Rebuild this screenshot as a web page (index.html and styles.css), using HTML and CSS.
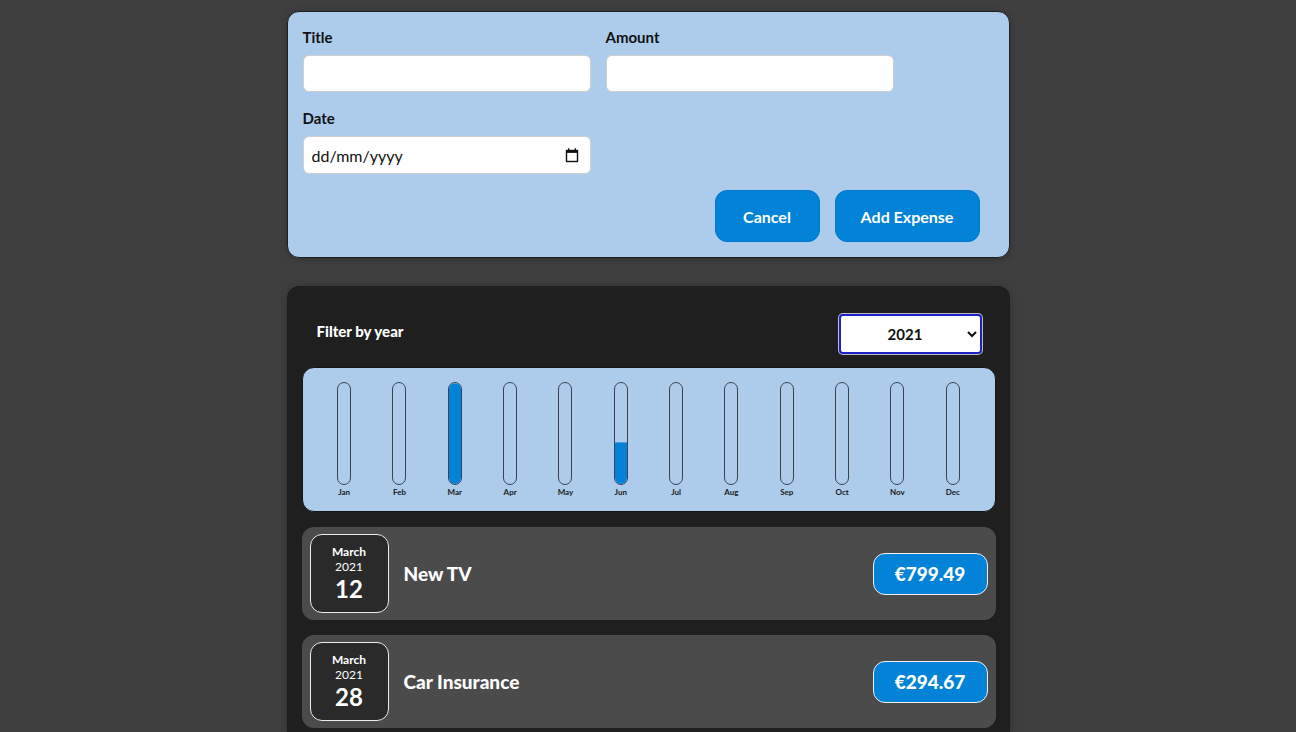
FILE: index.html
```html
<!DOCTYPE html>
<html lang="en">
<head>
<meta charset="utf-8">
<title>Expenses</title>
<link rel="stylesheet" href="styles.css">
</head>
<body>
<div class="app">
  <section class="new-expense">
    <form class="form">
      <div class="controls">
        <div class="control">
          <label class="control-label">Title</label>
          <input class="control-input" type="text">
        </div>
        <div class="control">
          <label class="control-label">Amount</label>
          <input class="control-input" type="text">
        </div>
        <div class="control">
          <label class="control-label">Date</label>
          <div class="date-box">
            <input class="date-input" type="text" placeholder="dd/mm/yyyy">
            <svg class="cal-icon" width="14" height="16" viewBox="0 0 14 16">
              <rect x="1.5" y="3.5" width="11" height="11" fill="none" stroke="#111" stroke-width="1.4"/>
              <rect x="1.5" y="3.5" width="11" height="2.4" fill="#111"/>
              <rect x="3" y="1.3" width="1.4" height="2.5" fill="#111"/>
              <rect x="9.6" y="1.3" width="1.4" height="2.5" fill="#111"/>
            </svg>
          </div>
        </div>
      </div>
      <div class="actions">
        <button type="button" class="btn btn-cancel">Cancel</button>
        <button type="button" class="btn btn-add">Add Expense</button>
      </div>
    </form>
  </section>

  <section class="expenses">
    <div class="filter">
      <label class="filter-label">Filter by year</label>
      <select class="filter-select">
        <option>2022</option>
        <option selected>2021</option>
        <option>2020</option>
        <option>2019</option>
      </select>
    </div>

    <div class="chart">
      <div class="bar"><div class="bar-inner"></div><div class="bar-label">Jan</div></div>
      <div class="bar"><div class="bar-inner"></div><div class="bar-label">Feb</div></div>
      <div class="bar"><div class="bar-inner"><div class="bar-fill" style="height:100%"></div></div><div class="bar-label">Mar</div></div>
      <div class="bar"><div class="bar-inner"></div><div class="bar-label">Apr</div></div>
      <div class="bar"><div class="bar-inner"></div><div class="bar-label">May</div></div>
      <div class="bar"><div class="bar-inner"><div class="bar-fill" style="height:42%"></div></div><div class="bar-label">Jun</div></div>
      <div class="bar"><div class="bar-inner"></div><div class="bar-label">Jul</div></div>
      <div class="bar"><div class="bar-inner"></div><div class="bar-label">Aug</div></div>
      <div class="bar"><div class="bar-inner"></div><div class="bar-label">Sep</div></div>
      <div class="bar"><div class="bar-inner"></div><div class="bar-label">Oct</div></div>
      <div class="bar"><div class="bar-inner"></div><div class="bar-label">Nov</div></div>
      <div class="bar"><div class="bar-inner"></div><div class="bar-label">Dec</div></div>
    </div>

    <ul class="list">
      <li class="item">
        <div class="date">
          <div class="date-month">March</div>
          <div class="date-year">2021</div>
          <div class="date-day">12</div>
        </div>
        <div class="item-desc">
          <h2 class="item-title">New TV</h2>
          <div class="item-price">€799.49</div>
        </div>
      </li>
      <li class="item">
        <div class="date">
          <div class="date-month">March</div>
          <div class="date-year">2021</div>
          <div class="date-day">28</div>
        </div>
        <div class="item-desc">
          <h2 class="item-title">Car Insurance</h2>
          <div class="item-price">€294.67</div>
        </div>
      </li>
    </ul>
  </section>
</div>
</body>
</html>
```

FILE: styles.css
```css
* { box-sizing: border-box; }

html, body {
  margin: 0;
  padding: 0;
}

body {
  background: #3f3f3f;
  font-family: "Lato", "Noto Sans", sans-serif;
  height: 732px;
  overflow: hidden;
}

.app {
  width: 723px;
  margin: 0 auto;
  padding-top: 11px;
}

/* ---------- new expense form ---------- */
.new-expense {
  background: #adcbea;
  border: 1px solid #1e1e1e;
  border-radius: 12px;
  padding: 15px;
  box-shadow: 0 1px 6px rgba(0, 0, 0, 0.25);
}

.controls {
  display: flex;
  flex-wrap: wrap;
  gap: 16px 15px;
  margin-bottom: 16px;
}

.control {
  width: 288px;
  display: flex;
  flex-direction: column;
}

.control-label {
  font-weight: 700;
  font-size: 15px;
  line-height: 20px;
  color: #111;
  margin-bottom: 8px;
}

.control-input,
.date-box {
  height: 37px;
  border: 1px solid #cfcfcf;
  border-radius: 6px;
  background: #fff;
  font: inherit;
  font-size: 16px;
  padding: 0 8px;
}

.date-box {
  height: 38px;
  display: flex;
  align-items: center;
  gap: 6px;
}

.date-input {
  flex: 1;
  min-width: 0;
  border: 0;
  outline: none;
  font: inherit;
  font-size: 16px;
  padding: 0;
  background: transparent;
}

.date-input::placeholder {
  color: #111;
  opacity: 1;
}

.cal-icon {
  margin-right: 3px;
}

.actions {
  display: flex;
  justify-content: flex-end;
  gap: 15px;
  padding-right: 14px;
}

.btn {
  font: inherit;
  font-size: 16px;
  font-weight: 700;
  color: #fff;
  background: #0383d7;
  border: 1px solid #0378c6;
  border-radius: 12px;
  height: 52px;
  cursor: pointer;
}

.btn-cancel { width: 105px; }
.btn-add { width: 145px; }

/* ---------- expenses card ---------- */
.expenses {
  margin-top: 28px;
  background: #1f1f1f;
  border-radius: 12px;
  padding: 15px 14px 16px 15px;
  box-shadow: 0 1px 8px rgba(0, 0, 0, 0.25);
}

.filter {
  display: flex;
  align-items: center;
  justify-content: space-between;
  padding: 0 14px 0 15px;
  margin: 13px 0;
  color: #fff;
}

.filter-label {
  font-weight: 900;
  font-size: 15px;
  margin-bottom: 6px;
}

.filter-select {
  width: 143px;
  height: 40px;
  font: inherit;
  font-size: 15px;
  font-weight: 700;
  color: #111;
  background: #fff;
  border: 2px solid #1c22c8;
  border-radius: 4px;
  box-shadow: 0 0 0 1px #bdbdbd;
  text-align: center;
  text-align-last: center;
  padding: 0 4px 0 6px;
}

/* ---------- chart ---------- */
.chart {
  background: #adcbea;
  border: 1px solid #151515;
  border-radius: 12px;
  height: 145px;
  padding: 14px;
  display: flex;
  justify-content: space-around;
  margin-bottom: 15px;
}

.bar {
  width: 20px;
  display: flex;
  flex-direction: column;
  align-items: center;
}

.bar-inner {
  width: 14px;
  height: 106px;
  border: 1px solid #3a4250;
  border-radius: 12px;
  overflow: hidden;
  display: flex;
  flex-direction: column;
  justify-content: flex-end;
}

.bar-fill {
  background: #0383d7;
  width: 100%;
  border-top: 1px solid #4aa0dc;
}

.bar-label {
  font-size: 8px;
  font-weight: 700;
  color: #1a1a1a;
  margin-top: 2px;
  line-height: 10px;
}

/* ---------- expense list ---------- */
.list {
  list-style: none;
  margin: 0;
  padding: 0;
  display: flex;
  flex-direction: column;
  gap: 15px;
}

.item {
  background: #4b4b4b;
  border-radius: 12px;
  padding: 7px 8px;
  display: flex;
  align-items: center;
  gap: 15px;
}

.date {
  width: 79px;
  height: 79px;
  border: 1px solid #ececec;
  border-radius: 12px;
  background: #2a2a2a;
  color: #fff;
  display: flex;
  flex-direction: column;
  align-items: center;
  justify-content: center;
}

.date-month {
  font-size: 12px;
  font-weight: 700;
  line-height: 15px;
}

.date-year {
  font-size: 12px;
  line-height: 16px;
}

.date-day {
  font-size: 24px;
  font-weight: 700;
  line-height: 28px;
}

.item-desc {
  flex: 1;
  display: flex;
  align-items: center;
  justify-content: space-between;
}

.item-title {
  margin: 0;
  color: #fff;
  font-size: 19px;
  font-weight: 900;
}

.item-price {
  width: 115px;
  height: 42px;
  display: flex;
  align-items: center;
  justify-content: center;
  background: #0383d7;
  color: #fff;
  border: 1px solid #f0f0f0;
  border-radius: 12px;
  font-size: 19px;
  font-weight: 900;
}
```
